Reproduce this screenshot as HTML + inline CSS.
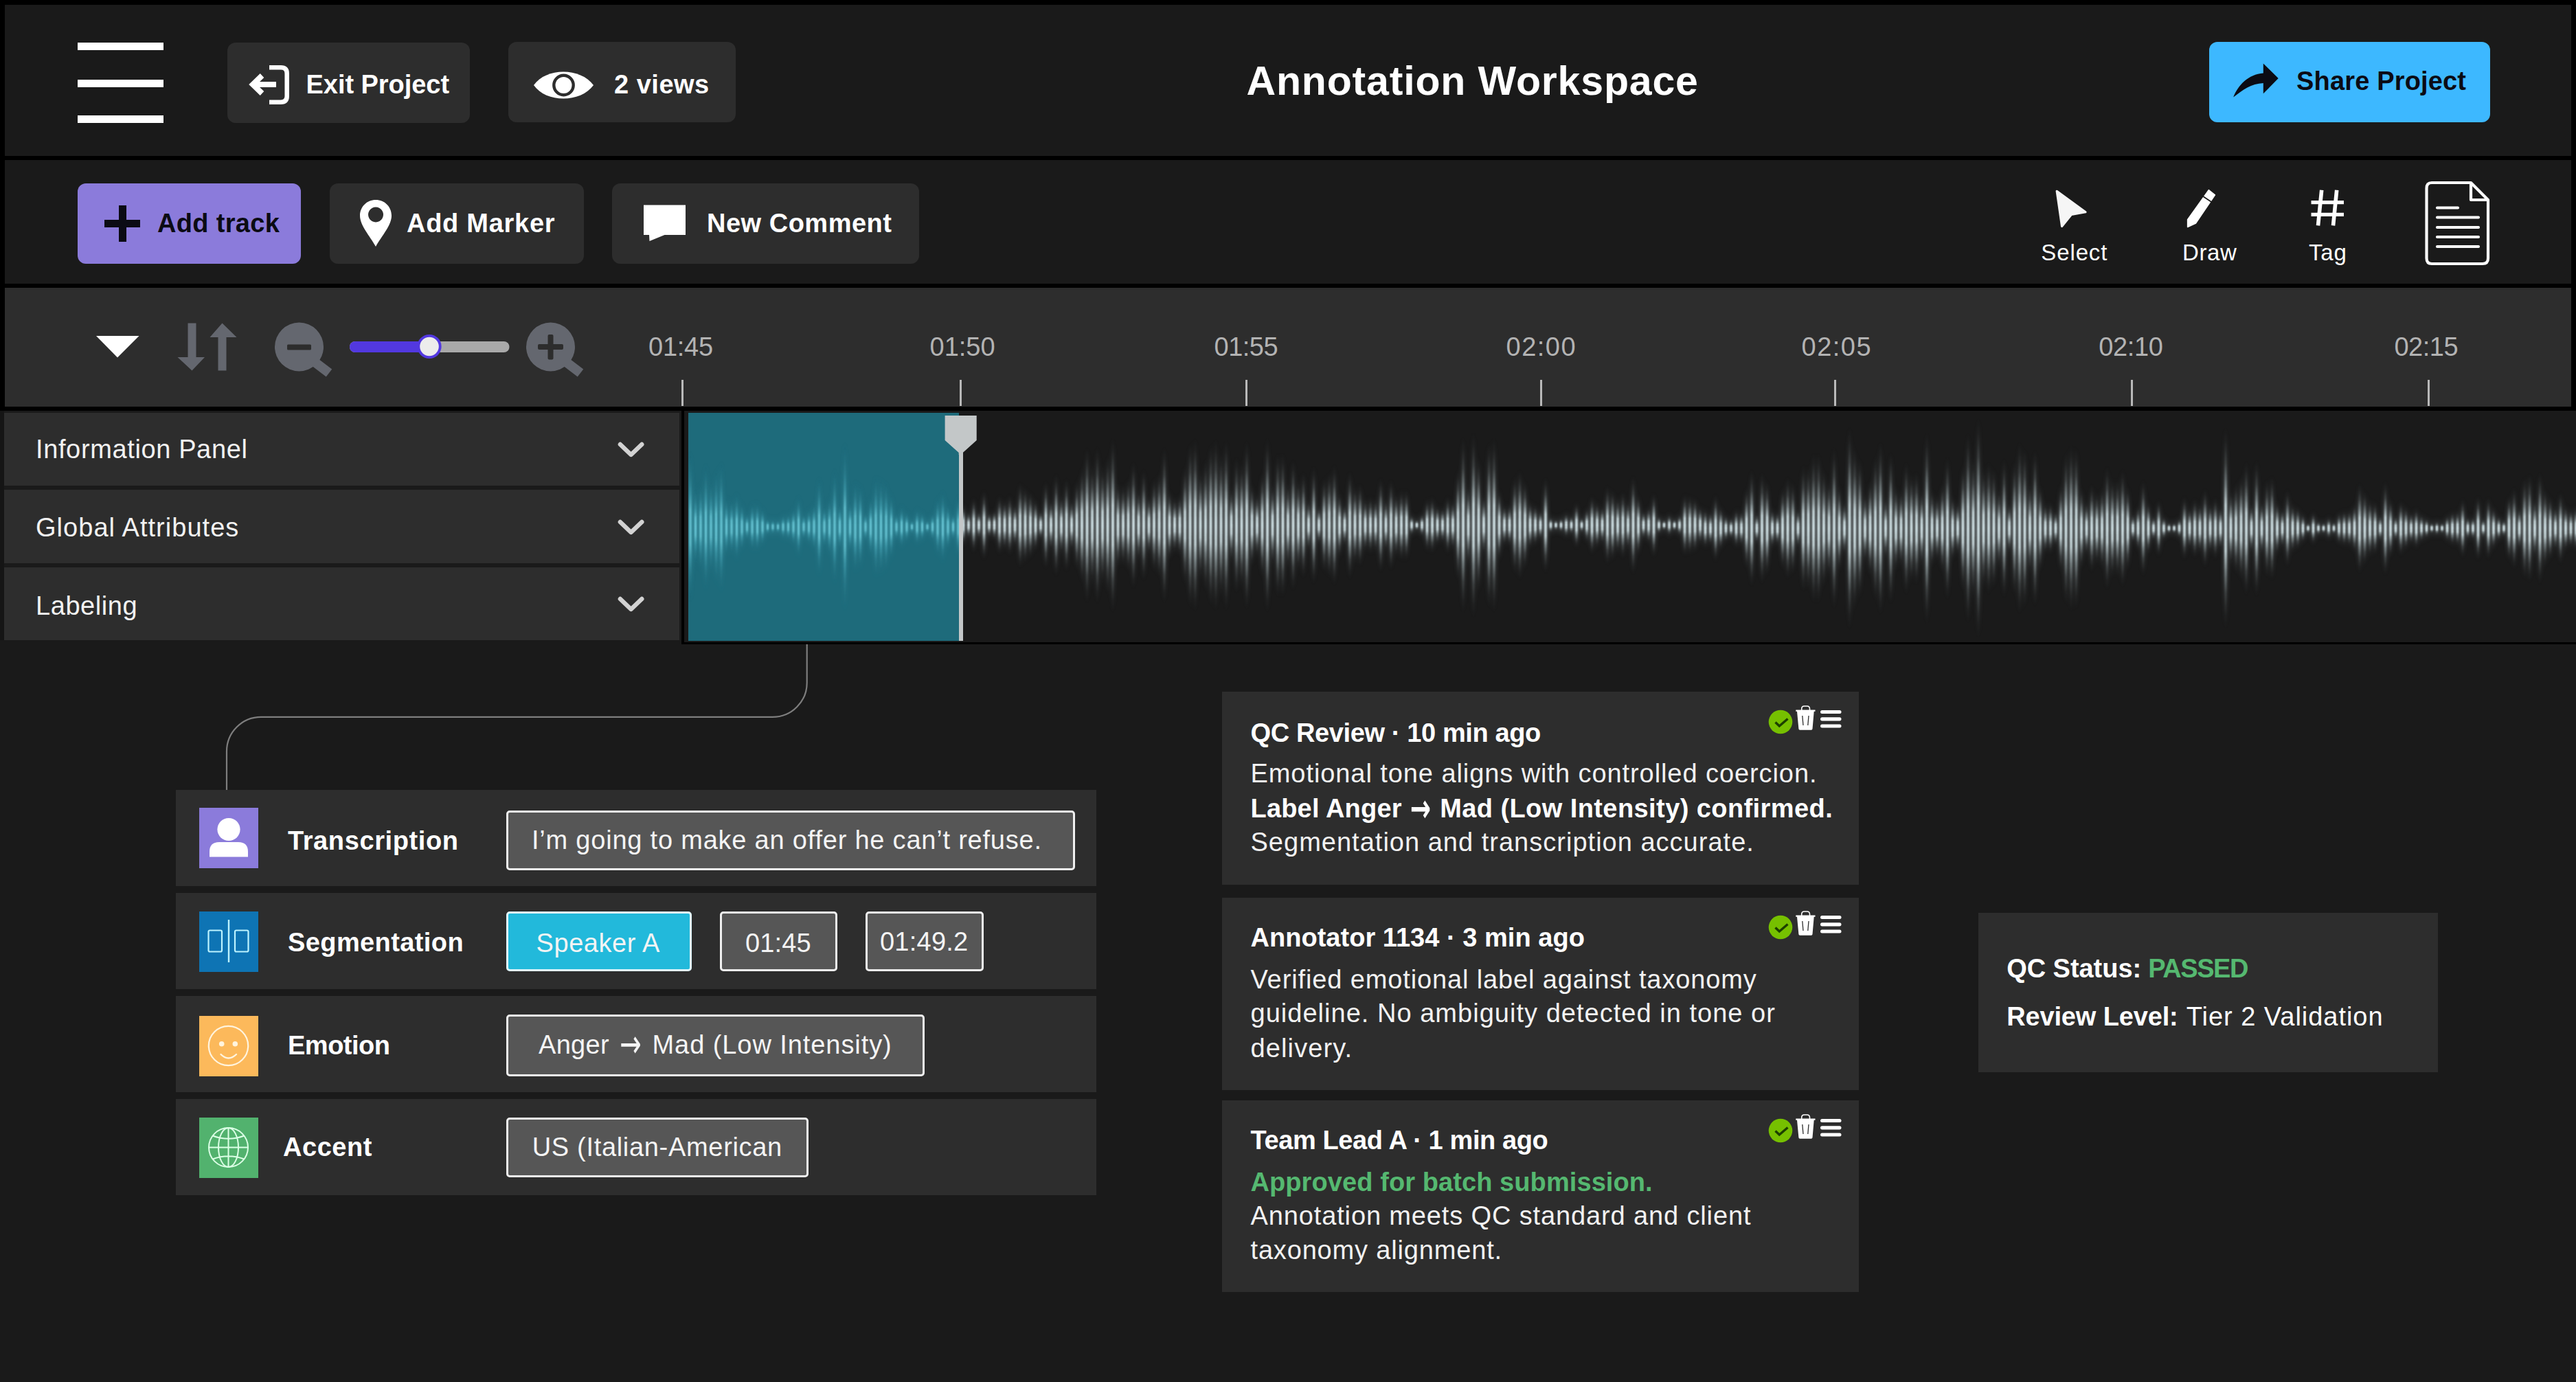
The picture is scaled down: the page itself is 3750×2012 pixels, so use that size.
<!DOCTYPE html>
<html lang="en"><head><meta charset="utf-8"><title>Annotation Workspace</title>
<style>
*{box-sizing:border-box;margin:0;padding:0}
html,body{width:3750px;height:2012px;overflow:hidden;background:#1a1a1a}
body{font-family:"Liberation Sans",sans-serif;color:#fff;position:relative}
.a{position:absolute}
.k{position:absolute;background:#000}
.btn{position:absolute;background:#2d2d2d;border-radius:12px}
.t{position:absolute;white-space:nowrap;line-height:1}
.b{font-weight:bold}
svg{position:absolute;overflow:visible}
.row{position:absolute;background:#2d2d2d}
.arow{position:absolute;left:256px;width:1340px;height:140px;background:#2d2d2d}
.ico{position:absolute;left:290px;width:86px;height:88px}
.inp{position:absolute;background:#565656;border:3px solid #f0f0f0;border-radius:5px}
.card{position:absolute;left:1779px;width:927px;background:#2d2d2d}
</style></head>
<body>
<div class="k" style="left:0px;top:0px;width:3750px;height:7px;"></div>
<div class="k" style="left:0px;top:0px;width:7px;height:598px;"></div>
<div class="k" style="left:3743px;top:0px;width:7px;height:598px;"></div>
<div class="k" style="left:0px;top:227px;width:3750px;height:6px;"></div>
<div class="k" style="left:0px;top:413px;width:3750px;height:6px;"></div>
<div class="k" style="left:0px;top:592px;width:3750px;height:6px;"></div>
<div class="a" style="left:7px;top:419px;width:3736px;height:173px;background:#2d2d2d"></div>
<div class="a" style="left:0px;top:598px;width:5.5px;height:334px;background:#151515"></div>
<div class="a" style="left:113px;top:62px;width:125px;height:11px;background:#fff"></div>
<div class="a" style="left:113px;top:116px;width:125px;height:11px;background:#fff"></div>
<div class="a" style="left:113px;top:168px;width:125px;height:11px;background:#fff"></div>
<div class="btn" style="left:331px;top:61.5px;width:353px;height:117px;"></div>
<svg style="left:355px;top:90px" width="75" height="68" viewBox="355 90 75 68">
<path d="M392 98.300 H409 Q417.700 98.300 417.700 107 V140 Q417.700 148.700 409 148.700 H392" fill="none" stroke="#fff" stroke-width="6.500"/>
<path d="M402 123 H371" fill="none" stroke="#fff" stroke-width="8"/>
<path d="M381.500 110 L368 123 L381.500 136" fill="none" stroke="#fff" stroke-width="8" stroke-linejoin="miter"/>
</svg>
<div class="t b" style="left:445.50px;top:104.00px;font-size:38px;letter-spacing:-0.045px;">Exit Project</div>
<div class="btn" style="left:740px;top:60.5px;width:331px;height:117.5px;"></div>
<svg style="left:777px;top:100px" width="88" height="48" viewBox="777 100 88 48">
<path d="M777 124 C795 98 845 98 864 124 C845 150 795 150 777 124 Z" fill="#fff"/>
<circle cx="820.500" cy="124" r="14.200" fill="#fff" stroke="#2d2d2d" stroke-width="4.400"/>
</svg>
<div class="t b" style="left:894.00px;top:104.00px;font-size:38px;letter-spacing:0.500px;">2 views</div>
<div class="t b" style="left:1814.50px;top:89.30px;font-size:59px;letter-spacing:0.842px;">Annotation Workspace</div>
<div class="btn" style="left:3216px;top:61px;width:409px;height:117px;background:#3db8ff"></div>
<svg style="left:3250px;top:92px" width="68" height="52" viewBox="3250 92 68 52">
<path d="M3251.200 141.400 C3258 124 3273 108 3294.800 106.400 L3294.800 92.400 L3316.700 114.100 L3294.800 136.300 L3294.800 120.900 C3277 121.500 3265 131 3251.200 141.400 Z" fill="#0b0b14"/>
</svg>
<div class="t b" style="left:3343.00px;top:99.30px;font-size:38px;letter-spacing:0.167px;color:#0b0b14;">Share Project</div>
<div class="btn" style="left:113px;top:266.5px;width:325px;height:117px;background:#8b7bdb"></div>
<div class="a" style="left:151.5px;top:320px;width:52.5px;height:11px;background:#0b0b14"></div>
<div class="a" style="left:173px;top:298.5px;width:10.5px;height:53.5px;background:#0b0b14"></div>
<div class="t b" style="left:229.00px;top:306.20px;font-size:38px;letter-spacing:0.312px;color:#0b0b14;">Add track</div>
<div class="btn" style="left:479.5px;top:266.5px;width:370.5px;height:117px;"></div>
<svg style="left:524px;top:290px" width="46" height="70" viewBox="524 290 46 70">
<path fill-rule="evenodd" d="M547 291 C534 291 524 301 524 314 C524 328 538 343 547 359 C556 343 570 328 570 314 C570 301 560 291 547 291 Z M547 301.500 a11 11 0 1 0 0.010 0 Z" fill="#fff"/>
</svg>
<div class="t b" style="left:592.00px;top:306.20px;font-size:38px;letter-spacing:0.722px;">Add Marker</div>
<div class="btn" style="left:891px;top:266.5px;width:446.5px;height:117px;"></div>
<svg style="left:937px;top:298px" width="62" height="54" viewBox="937 298 62 54">
<path d="M937 298.500 H998 V342 H967.500 L945.500 351 L945 342 H937 Z" fill="#fff"/>
</svg>
<div class="t b" style="left:1029.00px;top:306.20px;font-size:38px;letter-spacing:0.500px;">New Comment</div>
<svg style="left:2985px;top:270px" width="60" height="66" viewBox="2985 270 60 66">
<path d="M2994.200 278.300 L3036 308.700 L3015.300 312.400 L3001.600 329.600 Z" fill="#f6f6f6" stroke="#f6f6f6" stroke-width="3.200" stroke-linejoin="round"/>
</svg>
<div class="t" style="left:2971.30px;top:351.10px;font-size:33px;letter-spacing:0.880px;">Select</div>
<svg style="left:3180px;top:272px" width="50" height="64" viewBox="3180 272 50 64">
<path d="M3215.300 276.600 L3224.400 283.900 L3196.500 325 L3184.600 330.500 L3184.600 319.600 Z" fill="#fff" stroke="#fff" stroke-width="1.500" stroke-linejoin="round"/>
<path d="M3207.300 286 L3220.700 295" stroke="#1a1a1a" stroke-width="1.800" fill="none"/>
</svg>
<div class="t" style="left:3177.00px;top:351.10px;font-size:33px;letter-spacing:0.600px;">Draw</div>
<svg style="left:3360px;top:272px" width="56" height="62" viewBox="3360 272 56 62">
<path d="M3364.500 294.700 H3412 M3364.500 312.400 H3412" stroke="#fff" stroke-width="5.200" fill="none"/>
<path d="M3379.700 276.800 L3374.500 328.400 M3401.700 276.800 L3396.500 328.400" stroke="#fff" stroke-width="5.600" fill="none"/>
</svg>
<div class="t" style="left:3361.00px;top:350.70px;font-size:33px;letter-spacing:0.850px;">Tag</div>
<svg style="left:3528px;top:262px" width="100" height="128" viewBox="3528 262 100 128">
<path d="M3540 266 H3597 L3622 291 V376 Q3622 384 3614 384 H3540 Q3532.500 384 3532.500 376 V274 Q3532.500 266 3540 266 Z" fill="none" stroke="#fff" stroke-width="4.200" stroke-linejoin="round"/>
<path d="M3597 266 V291 H3622" fill="none" stroke="#fff" stroke-width="4.200" stroke-linejoin="round"/>
<path d="M3548 302.500 H3578 M3548 316.500 H3608 M3548 331 H3608 M3548 345 H3608 M3548 359 H3608" stroke="#fff" stroke-width="4.200" stroke-linecap="round" fill="none"/>
</svg>
<svg style="left:130px;top:460px" width="740" height="100" viewBox="130 460 740 100">
<path d="M140 489 H202.500 L171 520.500 Z" fill="#fff"/>
<path d="M273.500 470.500 H285.500 V520 H298 L279.500 539.500 L258.500 520 H273.500 Z" fill="#64676f"/>
<path d="M317.500 539.500 H329.500 V491 H344.500 L323.500 470.500 L305.500 491 H317.500 Z" fill="#64676f"/>
<path d="M458 527 L479 543" stroke="#64676f" stroke-width="14" fill="none"/>
<circle cx="435.500" cy="505" r="35.500" fill="#64676f"/>
<rect x="418" y="501.500" width="35" height="8" rx="1.500" fill="#2d2d2d"/>
<rect x="509" y="497" width="232.500" height="16" rx="8" fill="#a9a9a9"/>
<rect x="509" y="497" width="118" height="16" rx="8" fill="#5238e0"/>
<circle cx="625" cy="504.500" r="15.700" fill="#ececec" stroke="#5238e0" stroke-width="3.800"/>
<path d="M824 527 L845 543" stroke="#64676f" stroke-width="14" fill="none"/>
<circle cx="801.500" cy="505" r="35.500" fill="#64676f"/>
<rect x="783" y="501" width="37" height="8" rx="2" fill="#2d2d2d"/>
<rect x="797.500" y="487" width="8" height="36.500" rx="2" fill="#2d2d2d"/>
</svg>
<div class="a" style="left:991.5px;top:552.5px;width:3px;height:38px;background:#b9b9b9"></div>
<div class="t" style="left:944.00px;top:485.80px;font-size:38px;letter-spacing:-0.250px;color:#b3b3b3;">01:45</div>
<div class="a" style="left:1397.0px;top:552.5px;width:3px;height:38px;background:#b9b9b9"></div>
<div class="t" style="left:1353.50px;top:485.80px;font-size:38px;color:#b3b3b3;">01:50</div>
<div class="a" style="left:1812.5px;top:552.5px;width:3px;height:38px;background:#b9b9b9"></div>
<div class="t" style="left:1767.50px;top:485.80px;font-size:38px;letter-spacing:-0.500px;color:#b3b3b3;">01:55</div>
<div class="a" style="left:2241.5px;top:552.5px;width:3px;height:38px;background:#b9b9b9"></div>
<div class="t" style="left:2192.50px;top:485.80px;font-size:38px;letter-spacing:1.500px;color:#b3b3b3;">02:00</div>
<div class="a" style="left:2669.5px;top:552.5px;width:3px;height:38px;background:#b9b9b9"></div>
<div class="t" style="left:2622.50px;top:485.80px;font-size:38px;letter-spacing:1.500px;color:#b3b3b3;">02:05</div>
<div class="a" style="left:3101.5px;top:552.5px;width:3px;height:38px;background:#b9b9b9"></div>
<div class="t" style="left:3055.15px;top:485.80px;font-size:38px;letter-spacing:-0.325px;color:#b3b3b3;">02:10</div>
<div class="a" style="left:3533.5px;top:552.5px;width:3px;height:38px;background:#b9b9b9"></div>
<div class="t" style="left:3485.40px;top:485.80px;font-size:38px;letter-spacing:-0.450px;color:#b3b3b3;">02:15</div>
<div class="row" style="left:5.5px;top:600.5px;width:983.5px;height:106.79999999999995px;"></div>
<div class="t" style="left:52.00px;top:635.00px;font-size:38px;letter-spacing:0.625px;color:#f2f2f2;">Information Panel</div>
<svg style="left:896px;top:639.9px" width="46" height="30" viewBox="896 0 46 30">
<path d="M902.900 7 L918.600 22 L934.300 7" fill="none" stroke="#d2d2d2" stroke-width="6.400" stroke-linecap="round" stroke-linejoin="round"/></svg>
<div class="row" style="left:5.5px;top:713.1px;width:983.5px;height:107.10000000000002px;"></div>
<div class="t" style="left:52.00px;top:749.00px;font-size:38px;letter-spacing:1.031px;color:#f2f2f2;">Global Attributes</div>
<svg style="left:896px;top:752.7px" width="46" height="30" viewBox="896 0 46 30">
<path d="M902.900 7 L918.600 22 L934.300 7" fill="none" stroke="#d2d2d2" stroke-width="6.400" stroke-linecap="round" stroke-linejoin="round"/></svg>
<div class="row" style="left:5.5px;top:826px;width:983.5px;height:106px;"></div>
<div class="t" style="left:52.00px;top:863.00px;font-size:38px;letter-spacing:0.571px;color:#f2f2f2;">Labeling</div>
<svg style="left:896px;top:865.0px" width="46" height="30" viewBox="896 0 46 30">
<path d="M902.900 7 L918.600 22 L934.300 7" fill="none" stroke="#d2d2d2" stroke-width="6.400" stroke-linecap="round" stroke-linejoin="round"/></svg>
<div class="k" style="left:992.3px;top:598px;width:3.5px;height:340.3px;border-bottom-left-radius:3px"></div>
<div class="k" style="left:992.3px;top:934.8px;width:2760px;height:3.5px;"></div>
<div class="a" style="left:1001.5px;top:600.8px;width:394.5px;height:331.8px;background:#1e6b7b"></div>
<svg style="left:0;top:0" width="3750" height="2012" viewBox="0 0 3750 2012">
<defs>
<linearGradient id="gw" x1="0" y1="0" x2="0" y2="1"><stop offset="0.000" stop-color="#c2d4d8" stop-opacity="0"/><stop offset="0.090" stop-color="#c2d4d8" stop-opacity="0.03"/><stop offset="0.190" stop-color="#c2d4d8" stop-opacity="0.16"/><stop offset="0.290" stop-color="#c2d4d8" stop-opacity="0.5"/><stop offset="0.390" stop-color="#d8eaee" stop-opacity="0.92"/><stop offset="0.500" stop-color="#d8eaee" stop-opacity="1"/><stop offset="0.610" stop-color="#d8eaee" stop-opacity="0.92"/><stop offset="0.710" stop-color="#c2d4d8" stop-opacity="0.5"/><stop offset="0.810" stop-color="#c2d4d8" stop-opacity="0.16"/><stop offset="0.910" stop-color="#c2d4d8" stop-opacity="0.03"/><stop offset="1.000" stop-color="#c2d4d8" stop-opacity="0"/></linearGradient>
<linearGradient id="gwg" x1="0" y1="0" x2="0" y2="1"><stop offset="0.000" stop-color="#b4c6ca" stop-opacity="0"/><stop offset="0.100" stop-color="#b4c6ca" stop-opacity="0.22"/><stop offset="0.225" stop-color="#b4c6ca" stop-opacity="0.5"/><stop offset="0.350" stop-color="#c8dade" stop-opacity="0.8"/><stop offset="0.500" stop-color="#c8dade" stop-opacity="0.9"/><stop offset="0.650" stop-color="#c8dade" stop-opacity="0.8"/><stop offset="0.775" stop-color="#b4c6ca" stop-opacity="0.5"/><stop offset="0.900" stop-color="#b4c6ca" stop-opacity="0.22"/><stop offset="1.000" stop-color="#b4c6ca" stop-opacity="0"/></linearGradient>
<linearGradient id="gt" x1="0" y1="0" x2="0" y2="1"><stop offset="0.000" stop-color="#58bfd0" stop-opacity="0"/><stop offset="0.090" stop-color="#58bfd0" stop-opacity="0.03"/><stop offset="0.190" stop-color="#58bfd0" stop-opacity="0.16"/><stop offset="0.290" stop-color="#58bfd0" stop-opacity="0.5"/><stop offset="0.390" stop-color="#74d6e5" stop-opacity="0.92"/><stop offset="0.500" stop-color="#74d6e5" stop-opacity="1"/><stop offset="0.610" stop-color="#74d6e5" stop-opacity="0.92"/><stop offset="0.710" stop-color="#58bfd0" stop-opacity="0.5"/><stop offset="0.810" stop-color="#58bfd0" stop-opacity="0.16"/><stop offset="0.910" stop-color="#58bfd0" stop-opacity="0.03"/><stop offset="1.000" stop-color="#58bfd0" stop-opacity="0"/></linearGradient>
<linearGradient id="gtg" x1="0" y1="0" x2="0" y2="1"><stop offset="0.000" stop-color="#56bccf" stop-opacity="0"/><stop offset="0.100" stop-color="#56bccf" stop-opacity="0.22"/><stop offset="0.225" stop-color="#56bccf" stop-opacity="0.5"/><stop offset="0.350" stop-color="#6fd2e2" stop-opacity="0.8"/><stop offset="0.500" stop-color="#6fd2e2" stop-opacity="0.9"/><stop offset="0.650" stop-color="#6fd2e2" stop-opacity="0.8"/><stop offset="0.775" stop-color="#56bccf" stop-opacity="0.5"/><stop offset="0.900" stop-color="#56bccf" stop-opacity="0.22"/><stop offset="1.000" stop-color="#56bccf" stop-opacity="0"/></linearGradient>
<filter id="b1" x="-1%" y="-20%" width="102%" height="140%"><feGaussianBlur stdDeviation="0.9 0.1"/></filter>
<filter id="b2" x="-1%" y="-20%" width="102%" height="140%"><feGaussianBlur stdDeviation="3 6"/></filter>
<clipPath id="cw"><rect x="1001.500" y="598" width="2760" height="336.800"/></clipPath>
<clipPath id="ct"><rect x="1001.500" y="600.800" width="394.500" height="331.800"/></clipPath>
</defs>
<g clip-path="url(#ct)">
<g fill="url(#gtg)" filter="url(#b2)" opacity=".65"><g id="wt"><ellipse cx="1005.0" cy="767" rx="1.500" ry="114"/><ellipse cx="1012.5" cy="767" rx="1.500" ry="60"/><ellipse cx="1020.0" cy="767" rx="1.500" ry="67"/><ellipse cx="1027.5" cy="767" rx="1.500" ry="96"/><ellipse cx="1035.0" cy="767" rx="1.500" ry="71"/><ellipse cx="1042.5" cy="767" rx="1.500" ry="87"/><ellipse cx="1050.0" cy="767" rx="1.500" ry="99"/><ellipse cx="1057.5" cy="767" rx="1.500" ry="45"/><ellipse cx="1065.0" cy="767" rx="1.500" ry="42"/><ellipse cx="1072.5" cy="767" rx="1.500" ry="51"/><ellipse cx="1080.0" cy="767" rx="1.500" ry="36"/><ellipse cx="1087.5" cy="767" rx="1.500" ry="21"/><ellipse cx="1095.0" cy="767" rx="1.500" ry="36"/><ellipse cx="1102.5" cy="767" rx="1.500" ry="37"/><ellipse cx="1110.0" cy="767" rx="1.500" ry="28"/><ellipse cx="1117.5" cy="767" rx="1.500" ry="13"/><ellipse cx="1125.0" cy="767" rx="1.500" ry="12"/><ellipse cx="1132.5" cy="767" rx="1.500" ry="11"/><ellipse cx="1140.0" cy="767" rx="1.500" ry="18"/><ellipse cx="1147.5" cy="767" rx="1.500" ry="20"/><ellipse cx="1155.0" cy="767" rx="1.500" ry="28"/><ellipse cx="1162.5" cy="767" rx="1.500" ry="46"/><ellipse cx="1170.0" cy="767" rx="1.500" ry="20"/><ellipse cx="1177.5" cy="767" rx="1.500" ry="27"/><ellipse cx="1185.0" cy="767" rx="1.500" ry="36"/><ellipse cx="1192.5" cy="767" rx="1.500" ry="75"/><ellipse cx="1200.0" cy="767" rx="1.500" ry="32"/><ellipse cx="1207.5" cy="767" rx="1.500" ry="44"/><ellipse cx="1215.0" cy="767" rx="1.500" ry="87"/><ellipse cx="1222.5" cy="767" rx="1.500" ry="36"/><ellipse cx="1230.0" cy="767" rx="1.500" ry="128"/><ellipse cx="1237.5" cy="767" rx="1.500" ry="40"/><ellipse cx="1245.0" cy="767" rx="1.500" ry="70"/><ellipse cx="1252.5" cy="767" rx="1.500" ry="65"/><ellipse cx="1260.0" cy="767" rx="1.500" ry="23"/><ellipse cx="1267.5" cy="767" rx="1.500" ry="47"/><ellipse cx="1275.0" cy="767" rx="1.500" ry="77"/><ellipse cx="1282.5" cy="767" rx="1.500" ry="74"/><ellipse cx="1290.0" cy="767" rx="1.500" ry="68"/><ellipse cx="1297.5" cy="767" rx="1.500" ry="50"/><ellipse cx="1305.0" cy="767" rx="1.500" ry="21"/><ellipse cx="1312.5" cy="767" rx="1.500" ry="32"/><ellipse cx="1320.0" cy="767" rx="1.500" ry="23"/><ellipse cx="1327.5" cy="767" rx="1.500" ry="11"/><ellipse cx="1335.0" cy="767" rx="1.500" ry="27"/><ellipse cx="1342.5" cy="767" rx="1.500" ry="22"/><ellipse cx="1350.0" cy="767" rx="1.500" ry="11"/><ellipse cx="1357.5" cy="767" rx="1.500" ry="21"/><ellipse cx="1365.0" cy="767" rx="1.500" ry="44"/><ellipse cx="1372.5" cy="767" rx="1.500" ry="54"/><ellipse cx="1380.0" cy="767" rx="1.500" ry="35"/><ellipse cx="1387.5" cy="767" rx="1.500" ry="21"/><ellipse cx="1395.0" cy="767" rx="1.500" ry="46"/></g></g>
<use href="#wt" fill="url(#gt)" filter="url(#b1)" opacity=".88"/>
</g>
<g clip-path="url(#cw)">
<g fill="url(#gwg)" filter="url(#b2)" opacity=".62"><g id="ww"><ellipse cx="1402.5" cy="764.5" rx="1.800" ry="31"/><ellipse cx="1410.0" cy="764.5" rx="1.800" ry="20"/><ellipse cx="1417.5" cy="764.5" rx="1.800" ry="40"/><ellipse cx="1425.0" cy="764.5" rx="1.800" ry="21"/><ellipse cx="1432.5" cy="764.5" rx="1.800" ry="51"/><ellipse cx="1440.0" cy="764.5" rx="1.800" ry="19"/><ellipse cx="1447.5" cy="764.5" rx="1.800" ry="22"/><ellipse cx="1455.0" cy="764.5" rx="1.800" ry="43"/><ellipse cx="1462.5" cy="764.5" rx="1.800" ry="36"/><ellipse cx="1470.0" cy="764.5" rx="1.800" ry="44"/><ellipse cx="1477.5" cy="764.5" rx="1.800" ry="31"/><ellipse cx="1485.0" cy="764.5" rx="1.800" ry="63"/><ellipse cx="1492.5" cy="764.5" rx="1.800" ry="56"/><ellipse cx="1500.0" cy="764.5" rx="1.800" ry="49"/><ellipse cx="1507.5" cy="764.5" rx="1.800" ry="38"/><ellipse cx="1515.0" cy="764.5" rx="1.800" ry="22"/><ellipse cx="1522.5" cy="764.5" rx="1.800" ry="65"/><ellipse cx="1530.0" cy="764.5" rx="1.800" ry="38"/><ellipse cx="1537.5" cy="764.5" rx="1.800" ry="76"/><ellipse cx="1545.0" cy="764.5" rx="1.800" ry="44"/><ellipse cx="1552.5" cy="764.5" rx="1.800" ry="69"/><ellipse cx="1560.0" cy="764.5" rx="1.800" ry="38"/><ellipse cx="1567.5" cy="764.5" rx="1.800" ry="66"/><ellipse cx="1575.0" cy="764.5" rx="1.800" ry="86"/><ellipse cx="1582.5" cy="764.5" rx="1.800" ry="117"/><ellipse cx="1590.0" cy="764.5" rx="1.800" ry="89"/><ellipse cx="1597.5" cy="764.5" rx="1.800" ry="118"/><ellipse cx="1605.0" cy="764.5" rx="1.800" ry="87"/><ellipse cx="1612.5" cy="764.5" rx="1.800" ry="103"/><ellipse cx="1620.0" cy="764.5" rx="1.800" ry="131"/><ellipse cx="1627.5" cy="764.5" rx="1.800" ry="63"/><ellipse cx="1635.0" cy="764.5" rx="1.800" ry="60"/><ellipse cx="1642.5" cy="764.5" rx="1.800" ry="69"/><ellipse cx="1650.0" cy="764.5" rx="1.800" ry="95"/><ellipse cx="1657.5" cy="764.5" rx="1.800" ry="53"/><ellipse cx="1665.0" cy="764.5" rx="1.800" ry="83"/><ellipse cx="1672.5" cy="764.5" rx="1.800" ry="44"/><ellipse cx="1680.0" cy="764.5" rx="1.800" ry="69"/><ellipse cx="1687.5" cy="764.5" rx="1.800" ry="78"/><ellipse cx="1695.0" cy="764.5" rx="1.800" ry="117"/><ellipse cx="1702.5" cy="764.5" rx="1.800" ry="52"/><ellipse cx="1710.0" cy="764.5" rx="1.800" ry="41"/><ellipse cx="1717.5" cy="764.5" rx="1.800" ry="45"/><ellipse cx="1725.0" cy="764.5" rx="1.800" ry="88"/><ellipse cx="1732.5" cy="764.5" rx="1.800" ry="123"/><ellipse cx="1740.0" cy="764.5" rx="1.800" ry="130"/><ellipse cx="1747.5" cy="764.5" rx="1.800" ry="81"/><ellipse cx="1755.0" cy="764.5" rx="1.800" ry="98"/><ellipse cx="1762.5" cy="764.5" rx="1.800" ry="121"/><ellipse cx="1770.0" cy="764.5" rx="1.800" ry="129"/><ellipse cx="1777.5" cy="764.5" rx="1.800" ry="107"/><ellipse cx="1785.0" cy="764.5" rx="1.800" ry="128"/><ellipse cx="1792.5" cy="764.5" rx="1.800" ry="56"/><ellipse cx="1800.0" cy="764.5" rx="1.800" ry="102"/><ellipse cx="1807.5" cy="764.5" rx="1.800" ry="92"/><ellipse cx="1815.0" cy="764.5" rx="1.800" ry="127"/><ellipse cx="1822.5" cy="764.5" rx="1.800" ry="61"/><ellipse cx="1830.0" cy="764.5" rx="1.800" ry="47"/><ellipse cx="1837.5" cy="764.5" rx="1.800" ry="78"/><ellipse cx="1845.0" cy="764.5" rx="1.800" ry="131"/><ellipse cx="1852.5" cy="764.5" rx="1.800" ry="60"/><ellipse cx="1860.0" cy="764.5" rx="1.800" ry="107"/><ellipse cx="1867.5" cy="764.5" rx="1.800" ry="108"/><ellipse cx="1875.0" cy="764.5" rx="1.800" ry="63"/><ellipse cx="1882.5" cy="764.5" rx="1.800" ry="98"/><ellipse cx="1890.0" cy="764.5" rx="1.800" ry="67"/><ellipse cx="1897.5" cy="764.5" rx="1.800" ry="79"/><ellipse cx="1905.0" cy="764.5" rx="1.800" ry="38"/><ellipse cx="1912.5" cy="764.5" rx="1.800" ry="88"/><ellipse cx="1920.0" cy="764.5" rx="1.800" ry="29"/><ellipse cx="1927.5" cy="764.5" rx="1.800" ry="70"/><ellipse cx="1935.0" cy="764.5" rx="1.800" ry="78"/><ellipse cx="1942.5" cy="764.5" rx="1.800" ry="90"/><ellipse cx="1950.0" cy="764.5" rx="1.800" ry="49"/><ellipse cx="1957.5" cy="764.5" rx="1.800" ry="31"/><ellipse cx="1965.0" cy="764.5" rx="1.800" ry="80"/><ellipse cx="1972.5" cy="764.5" rx="1.800" ry="57"/><ellipse cx="1980.0" cy="764.5" rx="1.800" ry="61"/><ellipse cx="1987.5" cy="764.5" rx="1.800" ry="39"/><ellipse cx="1995.0" cy="764.5" rx="1.800" ry="42"/><ellipse cx="2002.5" cy="764.5" rx="1.800" ry="39"/><ellipse cx="2010.0" cy="764.5" rx="1.800" ry="70"/><ellipse cx="2017.5" cy="764.5" rx="1.800" ry="39"/><ellipse cx="2025.0" cy="764.5" rx="1.800" ry="67"/><ellipse cx="2032.5" cy="764.5" rx="1.800" ry="46"/><ellipse cx="2040.0" cy="764.5" rx="1.800" ry="52"/><ellipse cx="2047.5" cy="764.5" rx="1.800" ry="52"/><ellipse cx="2055.0" cy="764.5" rx="1.800" ry="15"/><ellipse cx="2062.5" cy="764.5" rx="1.800" ry="9"/><ellipse cx="2070.0" cy="764.5" rx="1.800" ry="17"/><ellipse cx="2077.5" cy="764.5" rx="1.800" ry="38"/><ellipse cx="2085.0" cy="764.5" rx="1.800" ry="41"/><ellipse cx="2092.5" cy="764.5" rx="1.800" ry="29"/><ellipse cx="2100.0" cy="764.5" rx="1.800" ry="26"/><ellipse cx="2107.5" cy="764.5" rx="1.800" ry="42"/><ellipse cx="2115.0" cy="764.5" rx="1.800" ry="36"/><ellipse cx="2122.5" cy="764.5" rx="1.800" ry="82"/><ellipse cx="2130.0" cy="764.5" rx="1.800" ry="132"/><ellipse cx="2137.5" cy="764.5" rx="1.800" ry="60"/><ellipse cx="2145.0" cy="764.5" rx="1.800" ry="139"/><ellipse cx="2152.5" cy="764.5" rx="1.800" ry="101"/><ellipse cx="2160.0" cy="764.5" rx="1.800" ry="44"/><ellipse cx="2167.5" cy="764.5" rx="1.800" ry="124"/><ellipse cx="2175.0" cy="764.5" rx="1.800" ry="131"/><ellipse cx="2182.5" cy="764.5" rx="1.800" ry="53"/><ellipse cx="2190.0" cy="764.5" rx="1.800" ry="30"/><ellipse cx="2197.5" cy="764.5" rx="1.800" ry="31"/><ellipse cx="2205.0" cy="764.5" rx="1.800" ry="72"/><ellipse cx="2212.5" cy="764.5" rx="1.800" ry="82"/><ellipse cx="2220.0" cy="764.5" rx="1.800" ry="65"/><ellipse cx="2227.5" cy="764.5" rx="1.800" ry="35"/><ellipse cx="2235.0" cy="764.5" rx="1.800" ry="30"/><ellipse cx="2242.5" cy="764.5" rx="1.800" ry="22"/><ellipse cx="2250.0" cy="764.5" rx="1.800" ry="71"/><ellipse cx="2257.5" cy="764.5" rx="1.800" ry="12"/><ellipse cx="2265.0" cy="764.5" rx="1.800" ry="9"/><ellipse cx="2272.5" cy="764.5" rx="1.800" ry="11"/><ellipse cx="2280.0" cy="764.5" rx="1.800" ry="18"/><ellipse cx="2287.5" cy="764.5" rx="1.800" ry="14"/><ellipse cx="2295.0" cy="764.5" rx="1.800" ry="33"/><ellipse cx="2302.5" cy="764.5" rx="1.800" ry="12"/><ellipse cx="2310.0" cy="764.5" rx="1.800" ry="25"/><ellipse cx="2317.5" cy="764.5" rx="1.800" ry="43"/><ellipse cx="2325.0" cy="764.5" rx="1.800" ry="34"/><ellipse cx="2332.5" cy="764.5" rx="1.800" ry="28"/><ellipse cx="2340.0" cy="764.5" rx="1.800" ry="58"/><ellipse cx="2347.5" cy="764.5" rx="1.800" ry="52"/><ellipse cx="2355.0" cy="764.5" rx="1.800" ry="41"/><ellipse cx="2362.5" cy="764.5" rx="1.800" ry="49"/><ellipse cx="2370.0" cy="764.5" rx="1.800" ry="36"/><ellipse cx="2377.5" cy="764.5" rx="1.800" ry="73"/><ellipse cx="2385.0" cy="764.5" rx="1.800" ry="45"/><ellipse cx="2392.5" cy="764.5" rx="1.800" ry="21"/><ellipse cx="2400.0" cy="764.5" rx="1.800" ry="27"/><ellipse cx="2407.5" cy="764.5" rx="1.800" ry="47"/><ellipse cx="2415.0" cy="764.5" rx="1.800" ry="14"/><ellipse cx="2422.5" cy="764.5" rx="1.800" ry="9"/><ellipse cx="2430.0" cy="764.5" rx="1.800" ry="16"/><ellipse cx="2437.5" cy="764.5" rx="1.800" ry="10"/><ellipse cx="2445.0" cy="764.5" rx="1.800" ry="16"/><ellipse cx="2452.5" cy="764.5" rx="1.800" ry="45"/><ellipse cx="2460.0" cy="764.5" rx="1.800" ry="43"/><ellipse cx="2467.5" cy="764.5" rx="1.800" ry="40"/><ellipse cx="2475.0" cy="764.5" rx="1.800" ry="28"/><ellipse cx="2482.5" cy="769" rx="1.800" ry="29"/><ellipse cx="2490.0" cy="769" rx="1.800" ry="25"/><ellipse cx="2497.5" cy="769" rx="1.800" ry="49"/><ellipse cx="2505.0" cy="769" rx="1.800" ry="32"/><ellipse cx="2512.5" cy="769" rx="1.800" ry="20"/><ellipse cx="2520.0" cy="769" rx="1.800" ry="16"/><ellipse cx="2527.5" cy="769" rx="1.800" ry="28"/><ellipse cx="2535.0" cy="769" rx="1.800" ry="26"/><ellipse cx="2542.5" cy="769" rx="1.800" ry="60"/><ellipse cx="2550.0" cy="769" rx="1.800" ry="87"/><ellipse cx="2557.5" cy="769" rx="1.800" ry="23"/><ellipse cx="2565.0" cy="769" rx="1.800" ry="83"/><ellipse cx="2572.5" cy="769" rx="1.800" ry="70"/><ellipse cx="2580.0" cy="769" rx="1.800" ry="29"/><ellipse cx="2587.5" cy="769" rx="1.800" ry="25"/><ellipse cx="2595.0" cy="769" rx="1.800" ry="60"/><ellipse cx="2602.5" cy="769" rx="1.800" ry="76"/><ellipse cx="2610.0" cy="769" rx="1.800" ry="68"/><ellipse cx="2617.5" cy="769" rx="1.800" ry="29"/><ellipse cx="2625.0" cy="769" rx="1.800" ry="94"/><ellipse cx="2632.5" cy="769" rx="1.800" ry="92"/><ellipse cx="2640.0" cy="769" rx="1.800" ry="112"/><ellipse cx="2647.5" cy="769" rx="1.800" ry="112"/><ellipse cx="2655.0" cy="769" rx="1.800" ry="87"/><ellipse cx="2662.5" cy="769" rx="1.800" ry="71"/><ellipse cx="2670.0" cy="769" rx="1.800" ry="121"/><ellipse cx="2677.5" cy="769" rx="1.800" ry="65"/><ellipse cx="2685.0" cy="769" rx="1.800" ry="40"/><ellipse cx="2692.5" cy="769" rx="1.800" ry="153"/><ellipse cx="2700.0" cy="769" rx="1.800" ry="122"/><ellipse cx="2707.5" cy="769" rx="1.800" ry="104"/><ellipse cx="2715.0" cy="769" rx="1.800" ry="51"/><ellipse cx="2722.5" cy="769" rx="1.800" ry="72"/><ellipse cx="2730.0" cy="769" rx="1.800" ry="108"/><ellipse cx="2737.5" cy="769" rx="1.800" ry="130"/><ellipse cx="2745.0" cy="769" rx="1.800" ry="46"/><ellipse cx="2752.5" cy="769" rx="1.800" ry="114"/><ellipse cx="2760.0" cy="769" rx="1.800" ry="63"/><ellipse cx="2767.5" cy="769" rx="1.800" ry="57"/><ellipse cx="2775.0" cy="769" rx="1.800" ry="99"/><ellipse cx="2782.5" cy="769" rx="1.800" ry="80"/><ellipse cx="2790.0" cy="769" rx="1.800" ry="84"/><ellipse cx="2797.5" cy="769" rx="1.800" ry="57"/><ellipse cx="2805.0" cy="769" rx="1.800" ry="144"/><ellipse cx="2812.5" cy="769" rx="1.800" ry="57"/><ellipse cx="2820.0" cy="769" rx="1.800" ry="48"/><ellipse cx="2827.5" cy="769" rx="1.800" ry="66"/><ellipse cx="2835.0" cy="769" rx="1.800" ry="107"/><ellipse cx="2842.5" cy="769" rx="1.800" ry="48"/><ellipse cx="2850.0" cy="769" rx="1.800" ry="39"/><ellipse cx="2857.5" cy="769" rx="1.800" ry="94"/><ellipse cx="2865.0" cy="769" rx="1.800" ry="143"/><ellipse cx="2872.5" cy="769" rx="1.800" ry="104"/><ellipse cx="2880.0" cy="769" rx="1.800" ry="166"/><ellipse cx="2887.5" cy="769" rx="1.800" ry="88"/><ellipse cx="2895.0" cy="769" rx="1.800" ry="99"/><ellipse cx="2902.5" cy="769" rx="1.800" ry="89"/><ellipse cx="2910.0" cy="769" rx="1.800" ry="58"/><ellipse cx="2917.5" cy="769" rx="1.800" ry="104"/><ellipse cx="2925.0" cy="769" rx="1.800" ry="38"/><ellipse cx="2932.5" cy="769" rx="1.800" ry="100"/><ellipse cx="2940.0" cy="769" rx="1.800" ry="129"/><ellipse cx="2947.5" cy="769" rx="1.800" ry="119"/><ellipse cx="2955.0" cy="769" rx="1.800" ry="67"/><ellipse cx="2962.5" cy="769" rx="1.800" ry="118"/><ellipse cx="2970.0" cy="769" rx="1.800" ry="64"/><ellipse cx="2977.5" cy="769" rx="1.800" ry="37"/><ellipse cx="2985.0" cy="769" rx="1.800" ry="38"/><ellipse cx="2992.5" cy="769" rx="1.800" ry="26"/><ellipse cx="3000.0" cy="769" rx="1.800" ry="66"/><ellipse cx="3007.5" cy="769" rx="1.800" ry="114"/><ellipse cx="3015.0" cy="769" rx="1.800" ry="125"/><ellipse cx="3022.5" cy="769" rx="1.800" ry="121"/><ellipse cx="3030.0" cy="769" rx="1.800" ry="60"/><ellipse cx="3037.5" cy="769" rx="1.800" ry="40"/><ellipse cx="3045.0" cy="769" rx="1.800" ry="65"/><ellipse cx="3052.5" cy="769" rx="1.800" ry="53"/><ellipse cx="3060.0" cy="769" rx="1.800" ry="60"/><ellipse cx="3067.5" cy="769" rx="1.800" ry="92"/><ellipse cx="3075.0" cy="769" rx="1.800" ry="73"/><ellipse cx="3082.5" cy="769" rx="1.800" ry="72"/><ellipse cx="3090.0" cy="769" rx="1.800" ry="88"/><ellipse cx="3097.5" cy="769" rx="1.800" ry="62"/><ellipse cx="3105.0" cy="769" rx="1.800" ry="21"/><ellipse cx="3112.5" cy="769" rx="1.800" ry="33"/><ellipse cx="3120.0" cy="769" rx="1.800" ry="71"/><ellipse cx="3127.5" cy="769" rx="1.800" ry="39"/><ellipse cx="3135.0" cy="769" rx="1.800" ry="18"/><ellipse cx="3142.5" cy="769" rx="1.800" ry="41"/><ellipse cx="3150.0" cy="769" rx="1.800" ry="17"/><ellipse cx="3157.5" cy="769" rx="1.800" ry="9"/><ellipse cx="3165.0" cy="769" rx="1.800" ry="9"/><ellipse cx="3172.5" cy="769" rx="1.800" ry="15"/><ellipse cx="3180.0" cy="769" rx="1.800" ry="46"/><ellipse cx="3187.5" cy="769" rx="1.800" ry="30"/><ellipse cx="3195.0" cy="769" rx="1.800" ry="43"/><ellipse cx="3202.5" cy="769" rx="1.800" ry="36"/><ellipse cx="3210.0" cy="769" rx="1.800" ry="58"/><ellipse cx="3217.5" cy="769" rx="1.800" ry="36"/><ellipse cx="3225.0" cy="769" rx="1.800" ry="45"/><ellipse cx="3232.5" cy="769" rx="1.800" ry="32"/><ellipse cx="3240.0" cy="769" rx="1.800" ry="152"/><ellipse cx="3247.5" cy="769" rx="1.800" ry="56"/><ellipse cx="3255.0" cy="769" rx="1.800" ry="67"/><ellipse cx="3262.5" cy="769" rx="1.800" ry="78"/><ellipse cx="3270.0" cy="769" rx="1.800" ry="100"/><ellipse cx="3277.5" cy="769" rx="1.800" ry="37"/><ellipse cx="3285.0" cy="769" rx="1.800" ry="102"/><ellipse cx="3292.5" cy="769" rx="1.800" ry="40"/><ellipse cx="3300.0" cy="769" rx="1.800" ry="72"/><ellipse cx="3307.5" cy="769" rx="1.800" ry="78"/><ellipse cx="3315.0" cy="769" rx="1.800" ry="40"/><ellipse cx="3322.5" cy="769" rx="1.800" ry="29"/><ellipse cx="3330.0" cy="769" rx="1.800" ry="57"/><ellipse cx="3337.5" cy="769" rx="1.800" ry="36"/><ellipse cx="3345.0" cy="769" rx="1.800" ry="31"/><ellipse cx="3352.5" cy="769" rx="1.800" ry="21"/><ellipse cx="3360.0" cy="769" rx="1.800" ry="9"/><ellipse cx="3367.5" cy="769" rx="1.800" ry="23"/><ellipse cx="3375.0" cy="769" rx="1.800" ry="11"/><ellipse cx="3382.5" cy="769" rx="1.800" ry="9"/><ellipse cx="3390.0" cy="769" rx="1.800" ry="16"/><ellipse cx="3397.5" cy="769" rx="1.800" ry="10"/><ellipse cx="3405.0" cy="769" rx="1.800" ry="23"/><ellipse cx="3412.5" cy="769" rx="1.800" ry="26"/><ellipse cx="3420.0" cy="769" rx="1.800" ry="27"/><ellipse cx="3427.5" cy="769" rx="1.800" ry="36"/><ellipse cx="3435.0" cy="769" rx="1.800" ry="67"/><ellipse cx="3442.5" cy="769" rx="1.800" ry="55"/><ellipse cx="3450.0" cy="769" rx="1.800" ry="42"/><ellipse cx="3457.5" cy="769" rx="1.800" ry="39"/><ellipse cx="3465.0" cy="769" rx="1.800" ry="20"/><ellipse cx="3472.5" cy="769" rx="1.800" ry="70"/><ellipse cx="3480.0" cy="769" rx="1.800" ry="43"/><ellipse cx="3487.5" cy="769" rx="1.800" ry="19"/><ellipse cx="3495.0" cy="769" rx="1.800" ry="40"/><ellipse cx="3502.5" cy="769" rx="1.800" ry="32"/><ellipse cx="3510.0" cy="769" rx="1.800" ry="23"/><ellipse cx="3517.5" cy="769" rx="1.800" ry="29"/><ellipse cx="3525.0" cy="769" rx="1.800" ry="20"/><ellipse cx="3532.5" cy="769" rx="1.800" ry="15"/><ellipse cx="3540.0" cy="769" rx="1.800" ry="9"/><ellipse cx="3547.5" cy="769" rx="1.800" ry="11"/><ellipse cx="3555.0" cy="769" rx="1.800" ry="9"/><ellipse cx="3562.5" cy="769" rx="1.800" ry="19"/><ellipse cx="3570.0" cy="769" rx="1.800" ry="25"/><ellipse cx="3577.5" cy="769" rx="1.800" ry="26"/><ellipse cx="3585.0" cy="769" rx="1.800" ry="43"/><ellipse cx="3592.5" cy="769" rx="1.800" ry="17"/><ellipse cx="3600.0" cy="769" rx="1.800" ry="17"/><ellipse cx="3607.5" cy="769" rx="1.800" ry="47"/><ellipse cx="3615.0" cy="769" rx="1.800" ry="15"/><ellipse cx="3622.5" cy="769" rx="1.800" ry="45"/><ellipse cx="3630.0" cy="769" rx="1.800" ry="31"/><ellipse cx="3637.5" cy="769" rx="1.800" ry="19"/><ellipse cx="3645.0" cy="769" rx="1.800" ry="13"/><ellipse cx="3652.5" cy="769" rx="1.800" ry="48"/><ellipse cx="3660.0" cy="769" rx="1.800" ry="60"/><ellipse cx="3667.5" cy="769" rx="1.800" ry="32"/><ellipse cx="3675.0" cy="769" rx="1.800" ry="75"/><ellipse cx="3682.5" cy="769" rx="1.800" ry="81"/><ellipse cx="3690.0" cy="769" rx="1.800" ry="44"/><ellipse cx="3697.5" cy="769" rx="1.800" ry="83"/><ellipse cx="3705.0" cy="769" rx="1.800" ry="58"/><ellipse cx="3712.5" cy="769" rx="1.800" ry="47"/><ellipse cx="3720.0" cy="769" rx="1.800" ry="33"/><ellipse cx="3727.5" cy="769" rx="1.800" ry="53"/><ellipse cx="3735.0" cy="769" rx="1.800" ry="34"/><ellipse cx="3742.5" cy="769" rx="1.800" ry="29"/><ellipse cx="3750.0" cy="769" rx="1.800" ry="33"/></g></g>
<use href="#ww" fill="url(#gw)" filter="url(#b1)"/>
</g>
</svg>
<div class="a" style="left:1395.7px;top:640px;width:6px;height:292.6px;background:#c3c7c8"></div>
<svg style="left:1374px;top:604px" width="48" height="60" viewBox="1374 604 48 60">
<path d="M1375.600 605 H1421.700 V641 L1401.700 659 V662 H1395.700 V659 L1375.600 641 Z" fill="#c3c7c8"/></svg>
<svg style="left:0;top:0" width="1300" height="1160" viewBox="0 0 1300 1160">
<path d="M1174.700 938 V993.900 A50 50 0 0 1 1124.700 1043.900 H380 A50 50 0 0 0 330 1093.900 V1150" fill="none" stroke="#7e7e7e" stroke-width="2.200"/></svg>
<div class="arow" style="left:256px;top:1150px;width:1340px;height:140px;"></div>
<div class="arow" style="left:256px;top:1300px;width:1340px;height:140px;"></div>
<div class="arow" style="left:256px;top:1450px;width:1340px;height:140px;"></div>
<div class="arow" style="left:256px;top:1600px;width:1340px;height:140px;"></div>
<div class="ico" style="left:290px;top:1176px;width:86px;height:88px;background:#8b7bdb"></div>
<svg style="left:290px;top:1176px" width="86" height="88" viewBox="290 1176 86 88">
<circle cx="333" cy="1207.500" r="16.600" fill="#fff"/>
<path d="M305 1247.500 V1240 Q305 1226 319 1226 H347 Q361 1226 361 1240 V1247.500 Z" fill="#fff"/></svg>
<div class="ico" style="left:290px;top:1326.5px;width:86px;height:88px;background:#0e74b4"></div>
<svg style="left:290px;top:1326px" width="86" height="88" viewBox="290 1326 86 88">
<path d="M333 1339 V1401" stroke="#bdf3ff" stroke-width="2.400" fill="none"/>
<rect x="303.500" y="1354.500" width="19.500" height="31" rx="2" fill="none" stroke="#bdf3ff" stroke-width="2.200"/>
<rect x="342" y="1354.500" width="19.500" height="31" rx="2" fill="none" stroke="#bdf3ff" stroke-width="2.200"/></svg>
<div class="ico" style="left:290px;top:1478.5px;width:86px;height:88px;background:#fcb95b"></div>
<svg style="left:290px;top:1478px" width="86" height="88" viewBox="290 1478 86 88">
<circle cx="332.500" cy="1522.500" r="28.700" fill="none" stroke="#fff4de" stroke-width="2.200"/>
<circle cx="322.700" cy="1519.800" r="3.800" fill="#fff4de"/><circle cx="342.300" cy="1519.800" r="3.800" fill="#fff4de"/>
<path d="M321.500 1535 Q332.500 1546 344 1535" fill="none" stroke="#fff4de" stroke-width="2.400" stroke-linecap="round"/></svg>
<div class="ico" style="left:290px;top:1626.5px;width:86px;height:88px;background:#52b26e"></div>
<svg style="left:290px;top:1626px" width="86" height="88" viewBox="290 1626 86 88">
<g fill="none" stroke="#dcffe6" stroke-width="2">
<circle cx="332.500" cy="1670.500" r="28.500"/>
<ellipse cx="332.500" cy="1670.500" rx="14.500" ry="28.500"/>
<path d="M332.500 1642 V1699 M304 1670.500 H361 M309.500 1653.500 Q332.500 1662 355.500 1653.500 M309.500 1687.500 Q332.500 1679 355.500 1687.500"/>
</g></svg>
<div class="t b" style="left:419.00px;top:1204.60px;font-size:38px;letter-spacing:0.608px;">Transcription</div>
<div class="t b" style="left:419.00px;top:1353.30px;font-size:38px;letter-spacing:0.400px;">Segmentation</div>
<div class="t b" style="left:419.00px;top:1503.40px;font-size:38px;letter-spacing:-0.500px;">Emotion</div>
<div class="t b" style="left:412.00px;top:1651.00px;font-size:38px;letter-spacing:0.540px;">Accent</div>
<div class="inp" style="left:736.5px;top:1179.5px;width:828.5px;height:87.8px;"></div>
<div class="t" style="left:774.00px;top:1204.00px;font-size:38px;letter-spacing:0.786px;color:#f4f4f4;">I’m going to make an offer he can’t refuse.</div>
<div class="inp" style="left:736.5px;top:1326.5px;width:270.5px;height:87.5px;background:#22b9db;border-color:#e2f9ff"></div>
<div class="t" style="left:780.60px;top:1353.70px;font-size:38px;letter-spacing:0.550px;color:#f4f4f4;">Speaker A</div>
<div class="inp" style="left:1047.5px;top:1327px;width:171.5px;height:87px;"></div>
<div class="t" style="left:1085.00px;top:1354.30px;font-size:38px;letter-spacing:0.150px;color:#f4f4f4;">01:45</div>
<div class="inp" style="left:1260px;top:1327px;width:172px;height:87px;"></div>
<div class="t" style="left:1281.00px;top:1352.00px;font-size:38px;letter-spacing:0.233px;color:#f4f4f4;">01:49.2</div>
<div class="inp" style="left:736.5px;top:1476.5px;width:609.5px;height:90.3px;"></div>
<div class="t" style="left:784.00px;top:1501.80px;font-size:38px;letter-spacing:0.300px;color:#f4f4f4;">Anger</div>
<div class="t" style="left:902.40px;top:1501.80px;font-size:38px;font-family:'DejaVu Sans',sans-serif;transform-origin:16.00px 22.00px;transform:scale(0.992,1.491);color:#f4f4f4;">→</div>
<div class="t" style="left:949.50px;top:1501.80px;font-size:38px;letter-spacing:0.928px;color:#f4f4f4;">Mad (Low Intensity)</div>
<div class="inp" style="left:736.5px;top:1626.5px;width:440.5px;height:87.5px;"></div>
<div class="t" style="left:774.70px;top:1651.20px;font-size:38px;letter-spacing:0.684px;color:#f4f4f4;">US (Italian-American</div>
<div class="card" style="left:1779px;top:1007px;width:927px;height:281px;"></div>
<div class="card" style="left:1779px;top:1307px;width:927px;height:280px;"></div>
<div class="card" style="left:1779px;top:1602px;width:927px;height:279px;"></div>
<svg style="left:2570px;top:1023.3px" width="116" height="50" viewBox="2570 -28 116 50">
<circle cx="2592" cy="0" r="17.300" fill="#76c000"/>
<path d="M2584.500 0.500 L2590.300 6 L2602.500 -4.500" fill="none" stroke="#1c3f00" stroke-width="3.400"/>
<path d="M2622.700 -17 V-19 Q2622.700 -23 2626.700 -23 H2630.500 Q2634.500 -23 2634.500 -19 V-17" fill="none" stroke="#fff" stroke-width="1.600"/>
<path d="M2614.300 -17.500 H2642.500 V-15.300 H2640.700 L2638.500 10 Q2638.400 11.700 2636.700 11.700 H2620.200 Q2618.500 11.700 2618.400 10 L2616 -15.300 H2614.300 Z" fill="#fff"/>
<path d="M2623.800 -9 L2625 5 M2633 -9 L2631.800 5" stroke="#2d2d2d" stroke-width="1.300" fill="none"/>
<rect x="2650" y="-17" width="30.500" height="5" rx="2.500" fill="#fff"/>
<rect x="2650" y="-6.800" width="30.500" height="5.200" rx="2.600" fill="#fff"/>
<rect x="2650" y="3.400" width="30.500" height="5" rx="2.500" fill="#fff"/>
</svg>
<svg style="left:2570px;top:1321.5px" width="116" height="50" viewBox="2570 -28 116 50">
<circle cx="2592" cy="0" r="17.300" fill="#76c000"/>
<path d="M2584.500 0.500 L2590.300 6 L2602.500 -4.500" fill="none" stroke="#1c3f00" stroke-width="3.400"/>
<path d="M2622.700 -17 V-19 Q2622.700 -23 2626.700 -23 H2630.500 Q2634.500 -23 2634.500 -19 V-17" fill="none" stroke="#fff" stroke-width="1.600"/>
<path d="M2614.300 -17.500 H2642.500 V-15.300 H2640.700 L2638.500 10 Q2638.400 11.700 2636.700 11.700 H2620.200 Q2618.500 11.700 2618.400 10 L2616 -15.300 H2614.300 Z" fill="#fff"/>
<path d="M2623.800 -9 L2625 5 M2633 -9 L2631.800 5" stroke="#2d2d2d" stroke-width="1.300" fill="none"/>
<rect x="2650" y="-17" width="30.500" height="5" rx="2.500" fill="#fff"/>
<rect x="2650" y="-6.800" width="30.500" height="5.200" rx="2.600" fill="#fff"/>
<rect x="2650" y="3.400" width="30.500" height="5" rx="2.500" fill="#fff"/>
</svg>
<svg style="left:2570px;top:1618px" width="116" height="50" viewBox="2570 -28 116 50">
<circle cx="2592" cy="0" r="17.300" fill="#76c000"/>
<path d="M2584.500 0.500 L2590.300 6 L2602.500 -4.500" fill="none" stroke="#1c3f00" stroke-width="3.400"/>
<path d="M2622.700 -17 V-19 Q2622.700 -23 2626.700 -23 H2630.500 Q2634.500 -23 2634.500 -19 V-17" fill="none" stroke="#fff" stroke-width="1.600"/>
<path d="M2614.300 -17.500 H2642.500 V-15.300 H2640.700 L2638.500 10 Q2638.400 11.700 2636.700 11.700 H2620.200 Q2618.500 11.700 2618.400 10 L2616 -15.300 H2614.300 Z" fill="#fff"/>
<path d="M2623.800 -9 L2625 5 M2633 -9 L2631.800 5" stroke="#2d2d2d" stroke-width="1.300" fill="none"/>
<rect x="2650" y="-17" width="30.500" height="5" rx="2.500" fill="#fff"/>
<rect x="2650" y="-6.800" width="30.500" height="5.200" rx="2.600" fill="#fff"/>
<rect x="2650" y="3.400" width="30.500" height="5" rx="2.500" fill="#fff"/>
</svg>
<div class="t b" style="left:1820.50px;top:1047.60px;font-size:38px;letter-spacing:-0.381px;">QC Review · 10 min ago</div>
<div class="t" style="left:1820.50px;top:1107.30px;font-size:38px;letter-spacing:0.924px;color:#f2f2f2;">Emotional tone aligns with controlled coercion.</div>
<div class="t b" style="left:1820.50px;top:1157.50px;font-size:38px;letter-spacing:0.180px;">Label Anger</div>
<div class="t b" style="left:2051.90px;top:1158.80px;font-size:38px;font-family:'DejaVu Sans',sans-serif;transform-origin:16.00px 22.00px;transform:scale(0.948,1.495);">→</div>
<div class="t b" style="left:2096.20px;top:1157.50px;font-size:38px;letter-spacing:0.417px;">Mad (Low Intensity) confirmed.</div>
<div class="t" style="left:1820.50px;top:1207.30px;font-size:38px;letter-spacing:1.013px;color:#f2f2f2;">Segmentation and transcription accurate.</div>
<div class="t b" style="left:1820.50px;top:1346.40px;font-size:38px;letter-spacing:0.028px;">Annotator 1134 · 3 min ago</div>
<div class="t" style="left:1820.50px;top:1406.50px;font-size:38px;letter-spacing:0.875px;color:#f2f2f2;">Verified emotional label against taxonomy</div>
<div class="t" style="left:1820.50px;top:1456.30px;font-size:38px;letter-spacing:1.024px;color:#f2f2f2;">guideline. No ambiguity detected in tone or</div>
<div class="t" style="left:1820.50px;top:1506.50px;font-size:38px;letter-spacing:1.125px;color:#f2f2f2;">delivery.</div>
<div class="t b" style="left:1820.50px;top:1641.40px;font-size:38px;letter-spacing:-0.395px;">Team Lead A · 1 min ago</div>
<div class="t b" style="left:1820.50px;top:1701.50px;font-size:38px;letter-spacing:0.083px;color:#55b870;">Approved for batch submission.</div>
<div class="t" style="left:1820.50px;top:1751.20px;font-size:38px;letter-spacing:0.868px;color:#f2f2f2;">Annotation meets QC standard and client</div>
<div class="t" style="left:1820.50px;top:1801.00px;font-size:38px;letter-spacing:0.833px;color:#f2f2f2;">taxonomy alignment.</div>
<div class="a" style="left:2880px;top:1329px;width:669px;height:232px;background:#2d2d2d"></div>
<div class="t b" style="left:2921.20px;top:1391.00px;font-size:38px;letter-spacing:-0.044px;">QC Status:</div>
<div class="t b" style="left:3127.30px;top:1391.00px;font-size:38px;letter-spacing:-1.480px;color:#55b870;">PASSED</div>
<div class="t b" style="left:2921.20px;top:1461.00px;font-size:38px;letter-spacing:-0.150px;">Review Level:</div>
<div class="t" style="left:3182.80px;top:1461.00px;font-size:38px;letter-spacing:0.962px;">Tier 2 Validation</div>
</body></html>
